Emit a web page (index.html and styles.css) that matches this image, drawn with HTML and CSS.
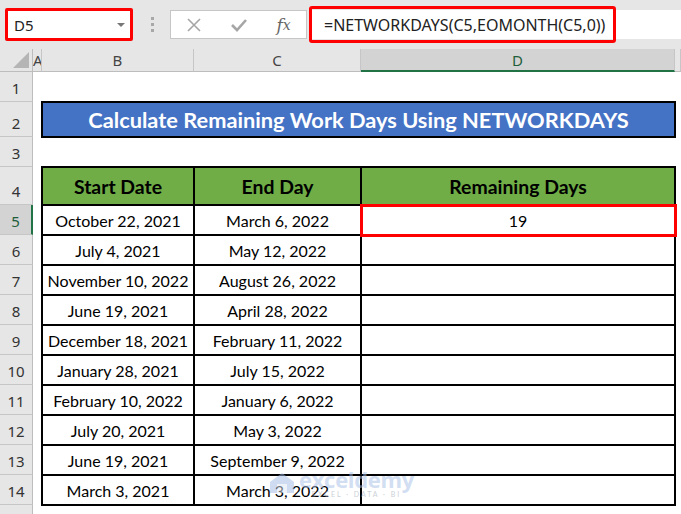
FILE: index.html
```html
<!DOCTYPE html>
<html lang="en">
<head>
  <meta charset="UTF-8">
  <meta name="viewport" content="width=device-width, initial-scale=1.0">
  <title>NETWORKDAYS</title>
  <link rel="stylesheet" href="styles.css">
</head>
<body>
  <div class="topbar">
    <div class="namebox">
      <span>D5</span>
      <span class="caret"></span>
    </div>
    <div class="grip"><i></i><i></i><i></i></div>
    <div class="fx-buttons">
      <span class="fx-btn">
        <svg width="16" height="16" viewBox="0 0 16 16"><path d="M2 2 L14 14 M14 2 L2 14" stroke="#a6a6a6" stroke-width="1.6" fill="none"/></svg>
      </span>
      <span class="fx-btn">
        <svg width="18" height="16" viewBox="0 0 18 16"><path d="M2 8 L7 13 L16 3" stroke="#a6a6a6" stroke-width="2.6" fill="none"/></svg>
      </span>
      <span class="fx-btn fx">f<small>x</small></span>
    </div>
    <div class="formula">
      <div class="formula-text">=NETWORKDAYS(C5,EOMONTH(C5,0))</div>
    </div>
  </div>

  <div class="sheet">
    <div class="corner">
      <svg width="18" height="18" viewBox="0 0 18 18"><path d="M17 1 L17 17 L1 17 Z" fill="#b5b5b5"/></svg>
    </div>
    <div class="col-heads">
      <div class="col-head col-a">A</div>
      <div class="col-head col-b">B</div>
      <div class="col-head col-c">C</div>
      <div class="col-head col-d active">D</div>
      <div class="col-head col-e"></div>
    </div>
    <div class="row-heads">
      <div class="row-head">1</div>
      <div class="row-head r35">2</div>
      <div class="row-head">3</div>
      <div class="row-head r38">4</div>
      <div class="row-head active">5</div>
      <div class="row-head">6</div>
      <div class="row-head">7</div>
      <div class="row-head">8</div>
      <div class="row-head">9</div>
      <div class="row-head">10</div>
      <div class="row-head">11</div>
      <div class="row-head">12</div>
      <div class="row-head">13</div>
      <div class="row-head">14</div>
      <div class="row-head last"></div>
    </div>
    <div class="cells">
      <div class="title">Calculate Remaining Work Days Using NETWORKDAYS</div>
      <div class="data">
        <div class="th">Start Date</div><div class="th">End Day</div><div class="th">Remaining Days</div>
        <div>October 22, 2021</div><div>March 6, 2022</div><div class="hl">19</div>
        <div>July 4, 2021</div><div>May 12, 2022</div><div></div>
        <div>November 10, 2022</div><div>August 26, 2022</div><div></div>
        <div>June 19, 2021</div><div>April 28, 2022</div><div></div>
        <div>December 18, 2021</div><div>February 11, 2022</div><div></div>
        <div>January 28, 2021</div><div>July 15, 2022</div><div></div>
        <div>February 10, 2022</div><div>January 6, 2022</div><div></div>
        <div>July 20, 2021</div><div>May 3, 2022</div><div></div>
        <div>June 19, 2021</div><div>September 9, 2022</div><div></div>
        <div>March 3, 2021</div><div>March 3, 2022</div><div></div>
      </div>
      <div class="watermark">
        <svg width="28" height="24" viewBox="0 0 28 24">
          <path d="M2 11 L14 2 L26 11 L26 22 L2 22 Z" fill="#9fb9e3"/>
          <path d="M9 13 L19 13 L19 22 L9 22 Z" fill="#dfe8f6"/>
        </svg>
        <div class="wm-text">
          <span class="wm-name">exceldemy</span>
          <span class="wm-sub">EXCEL · DATA · BI</span>
        </div>
      </div>
    </div>
  </div>
</body>
</html>
```

FILE: styles.css
```css
body {
  margin: 0;
  width: 681px;
  height: 514px;
  overflow: hidden;
  font-family: "Noto Sans", sans-serif;
  background: #fff;
}

/* formula bar */
.topbar {
  display: flex;
  align-items: center;
  height: 49px;
  background: #e6e6e6;
}
.namebox {
  width: 128px;
  height: 33px;
  margin-left: 5px;
  box-sizing: border-box;
  border: 3px solid #f00;
  border-radius: 2px;
  background: #fff;
  display: flex;
  align-items: center;
  justify-content: space-between;
  padding: 0 5px 0 6px;
  font-size: 15px;
  color: #222;
}
.caret {
  width: 0;
  height: 0;
  border-left: 4px solid transparent;
  border-right: 4px solid transparent;
  border-top: 4px solid #777;
}
.grip {
  display: flex;
  flex-direction: column;
  gap: 3px;
  margin: 0 16px 0 18px;
}
.grip i {
  width: 3px;
  height: 3px;
  background: #a8a8a8;
}
.fx-buttons {
  width: 137px;
  height: 29px;
  box-sizing: border-box;
  border: 1px solid #c6c6c6;
  background: #fff;
  display: flex;
  align-items: center;
}
.fx-btn {
  width: 45px;
  display: flex;
  justify-content: center;
  align-items: center;
}
.fx {
  font-family: "DejaVu Serif", "Liberation Serif", serif;
  font-style: italic;
  font-size: 17px;
  color: #666;
}
.fx small {
  font-size: 14px;
}
.formula {
  flex: 1;
  height: 29px;
  margin-left: 2px;
  background: #fff;
  display: flex;
  align-items: center;
}
.formula-text {
  width: 307px;
  height: 37px;
  box-sizing: border-box;
  border: 3px solid #f00;
  border-radius: 3px;
  padding-left: 12px;
  display: flex;
  align-items: center;
  font-size: 16px;
  color: #222;
}

/* sheet */
.sheet {
  display: grid;
  grid-template-columns: 33px 1fr;
  grid-template-rows: 23px 1fr;
  height: 465px;
}
.corner {
  background: #e6e6e6;
  border-right: 1px solid #bdbdbd;
  border-bottom: 1px solid #bdbdbd;
  display: flex;
  align-items: flex-end;
  justify-content: flex-end;
  padding: 0 2px 2px 0;
}
.col-heads {
  display: flex;
  background: #e6e6e6;
}
.col-head {
  box-sizing: border-box;
  height: 23px;
  border-right: 1px solid #c6c6c6;
  border-bottom: 1px solid #bdbdbd;
  text-align: center;
  font-size: 15px;
  line-height: 22px;
  color: #444;
}
.col-a { width: 9px; overflow: hidden; }
.col-b { width: 152px; }
.col-c { width: 167px; }
.col-d { width: 314px; }
.col-e { flex: 1; }
.col-head.active {
  background: #d3d3d3;
  border-bottom: 2px solid #217346;
  color: #1f5e3a;
}
.row-heads {
  display: flex;
  flex-direction: column;
  background: #e6e6e6;
}
.row-head {
  box-sizing: border-box;
  height: 30px;
  flex-shrink: 0;
  border-right: 1px solid #bdbdbd;
  border-bottom: 1px solid #c6c6c6;
  display: flex;
  align-items: flex-end;
  justify-content: center;
  padding-bottom: 3px;
  font-size: 15px;
  color: #333;
}
.row-head.r35 { height: 35px; }
.row-head.r38 { height: 38px; }
.row-head.last { flex: 1; border-bottom: none; }
.row-head.active {
  background: #d3d3d3;
  border-right: 2px solid #217346;
  color: #1f5e3a;
}

.cells {
  position: relative;
  padding: 29px 0 0 8px;
  font-family: Lato, "Liberation Sans", sans-serif;
}
.title {
  width: 635px;
  height: 37px;
  box-sizing: border-box;
  border: 2px solid #000;
  background: #4472c4;
  color: #fff;
  font-weight: bold;
  font-size: 21.8px;
  display: flex;
  align-items: center;
  justify-content: center;
}
.data {
  margin-top: 28px;
  width: fit-content;
  display: grid;
  grid-template-columns: 150px 165px 312px;
  grid-template-rows: 36px;
  grid-auto-rows: 28px;
  gap: 2px;
  border: 2px solid #000;
  background: #000;
}
.data div {
  background: #fff;
  display: flex;
  align-items: center;
  justify-content: center;
  font-size: 16px;
  color: #000;
}
.data .th {
  background: #70ad47;
  font-weight: bold;
  font-size: 19.4px;
}
.data .hl {
  position: relative;
}
.data .hl::after {
  content: "";
  position: absolute;
  top: -2px;
  left: -2px;
  right: -3px;
  bottom: -3px;
  border: 3px solid #f00;
}

.watermark {
  position: absolute;
  left: 235px;
  top: 396px;
  display: flex;
  align-items: center;
  gap: 3px;
  opacity: 0.5;
}
.wm-text {
  display: flex;
  flex-direction: column;
  align-items: center;
  line-height: 1;
}
.wm-name {
  font-family: "Open Sans", sans-serif;
  font-weight: bold;
  font-size: 22px;
  color: #a7bfe6;
  letter-spacing: -0.3px;
}
.wm-sub {
  font-size: 7px;
  letter-spacing: 2px;
  color: #9aa3b0;
  margin-top: 1px;
}
```
